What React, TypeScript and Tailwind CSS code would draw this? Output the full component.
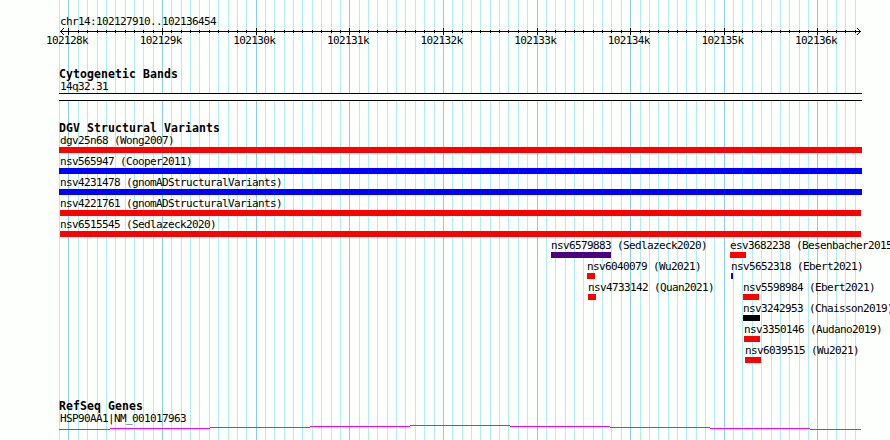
import clsx from 'clsx'

const ORIGIN = 68.43
const STEP = 9.362

const gridLines = Array.from({ length: 86 }, (_, n) => {
  const i = n - 1
  return { x: Math.round(ORIGIN + STEP * i), major: i % 10 === 0 }
})

const scaleLabels = [
  '102128k',
  '102129k',
  '102130k',
  '102131k',
  '102132k',
  '102133k',
  '102134k',
  '102135k',
  '102136k',
]

type Variant = { name: string; bar: string; label?: string }

const wideVariants: Variant[] = [
  { name: 'dgv25n68 (Wong2007)', bar: 'ml-[59px] w-[803px] bg-[#ff0000]' },
  { name: 'nsv565947 (Cooper2011)', bar: 'ml-[59px] w-[803px] bg-[#0000ff]' },
  { name: 'nsv4231478 (gnomADStructuralVariants)', bar: 'ml-[59px] w-[803px] bg-[#0000ff]' },
  { name: 'nsv4221761 (gnomADStructuralVariants)', bar: 'ml-[60px] w-[801px] bg-[#ff0000]' },
  { name: 'nsv6515545 (Sedlazeck2020)', bar: 'ml-[60px] w-[801px] bg-[#ff0000]' },
]

const middleVariants: Variant[] = [
  { name: 'nsv6579883 (Sedlazeck2020)', label: 'pl-0', bar: 'w-[60px] bg-[#4b0082]' },
  { name: 'nsv6040079 (Wu2021)', label: 'pl-9', bar: 'ml-9 w-2 bg-[#ff0000]' },
  { name: 'nsv4733142 (Quan2021)', label: 'pl-[37px]', bar: 'ml-[37px] w-2 bg-[#ff0000]' },
]

const rightVariants: Variant[] = [
  { name: 'esv3682238 (Besenbacher2015)', label: 'pl-0', bar: 'w-4 bg-[#ff0000]' },
  { name: 'nsv5652318 (Ebert2021)', label: 'pl-px', bar: 'ml-px w-0.5 bg-[#0000ff]' },
  { name: 'nsv5598984 (Ebert2021)', label: 'pl-[13px]', bar: 'ml-[13px] w-4 bg-[#ff0000]' },
  { name: 'nsv3242953 (Chaisson2019)', label: 'pl-[13px]', bar: 'ml-[13px] w-[17px] bg-black' },
  { name: 'nsv3350146 (Audano2019)', label: 'pl-3.5', bar: 'ml-3.5 w-4 bg-[#ff0000]' },
  { name: 'nsv6039515 (Wu2021)', label: 'pl-[15px]', bar: 'ml-[15px] w-4 bg-[#ff0000]' },
]

function Grid() {
  return (
    <svg className="absolute inset-0" width="890" height="440" shapeRendering="crispEdges">
      {gridLines.map(({ x, major }) => (
        <rect key={x} x={x} y="0" width="1" height="440" fill={major ? '#87ceeb' : '#afeeee'} />
      ))}
    </svg>
  )
}

function Ruler() {
  return (
    <svg className="block" width="890" height="7" shapeRendering="crispEdges">
      <rect x="60" y="3" width="801" height="1" />
      {gridLines.slice(1).map(({ x, major }) => (
        <rect key={x} x={x} y={major ? 0 : 2} width="1" height={major ? 7 : 3} />
      ))}
      <path d="M61 2h1v1h-1zM62 1h1v1h-1zM63 0h1v1h-1zM61 4h1v1h-1zM62 5h1v1h-1zM63 6h1v1h-1z" />
      <path d="M859 2h1v1h-1zM858 1h1v1h-1zM857 0h1v1h-1zM859 4h1v1h-1zM858 5h1v1h-1zM857 6h1v1h-1z" />
    </svg>
  )
}

function Heading({ children }: { children: string }) {
  return (
    <h2 className="h-[13px] pl-[59px] text-[11.5px] leading-[13px] font-bold tracking-[0.077px]">{children}</h2>
  )
}

function VariantRow({ variant }: { variant: Variant }) {
  return (
    <div className="h-[21px]">
      <div className={clsx('h-[15px] leading-[17px]', variant.label ?? 'pl-[60px]')}>{variant.name}</div>
      <div className={clsx('h-1.5', variant.bar)} />
    </div>
  )
}

export default function App() {
  return (
    <div className="relative h-[440px] w-[890px] overflow-hidden bg-[#fdfffc] font-['DejaVu_Sans_Mono',monospace] text-[11px] tracking-[-0.622px] whitespace-pre text-black">
      <Grid />
      <div className="relative flex h-full flex-col">
        {/* Scale */}
        <div className="h-[68px] pt-[15px]">
          <div className="h-[13px] pl-[60px] leading-[13px]">chr14:102127910..102136454</div>
          <Ruler />
          <div className="flex h-[13px] w-[837px] justify-between pl-[46px] leading-[11px]">
            {scaleLabels.map((label) => (
              <span key={label} className="w-[42px]">{label}</span>
            ))}
          </div>
        </div>

        {/* Cytogenetic bands */}
        <div className="h-[54px]">
          <Heading>Cytogenetic Bands</Heading>
          <div className="h-3 pl-[60px] leading-[11px]">14q32.31</div>
          <div className="ml-[59px] h-2 w-[803px] border-y border-black bg-[#fdfffc]" />
        </div>

        {/* Structural variants */}
        <div className="h-[278px]">
          <Heading>DGV Structural Variants</Heading>
          <div className="-mt-[3px]">
            {wideVariants.map((v) => (
              <VariantRow key={v.name} variant={v} />
            ))}
            <div className="flex pl-[551px]">
              <div className="w-[179px] shrink-0">
                {middleVariants.map((v) => (
                  <VariantRow key={v.name} variant={v} />
                ))}
              </div>
              <div className="w-[160px] shrink-0">
                {rightVariants.map((v) => (
                  <VariantRow key={v.name} variant={v} />
                ))}
              </div>
            </div>
          </div>
        </div>

        {/* Genes */}
        <div>
          <Heading>RefSeq Genes</Heading>
          <div className="h-3 pl-[60px] leading-[11px]">HSP90AA1|NM_001017963</div>
          <svg className="block" width="890" height="5" shapeRendering="crispEdges" fill="#ff00ff">
            <rect x="59" y="4" width="51" height="1" />
            <rect x="110" y="3" width="100" height="1" />
            <rect x="210" y="2" width="100" height="1" />
            <rect x="310" y="1" width="100" height="1" />
            <rect x="410" y="0" width="100" height="1" />
            <rect x="510" y="1" width="100" height="1" />
            <rect x="610" y="2" width="100" height="1" />
            <rect x="710" y="3" width="100" height="1" />
            <rect x="810" y="4" width="51" height="1" />
          </svg>
        </div>
      </div>
    </div>
  )
}
